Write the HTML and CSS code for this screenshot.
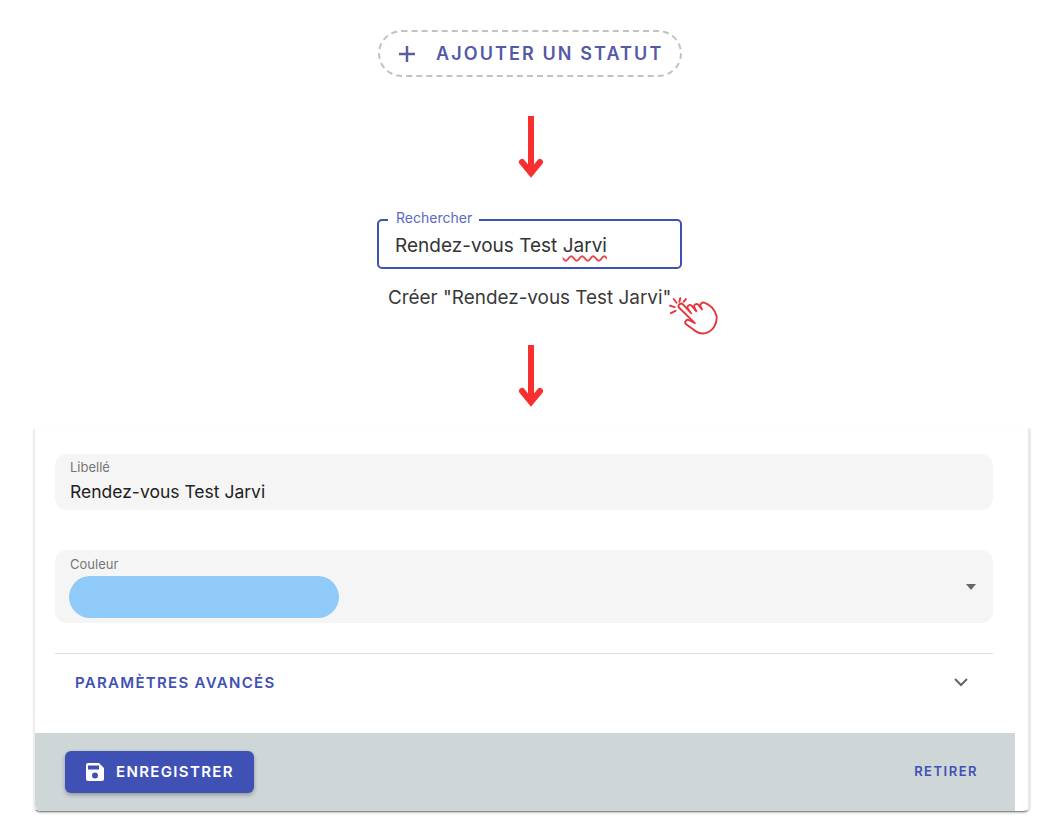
FILE: index.html
```html
<!DOCTYPE html>
<html lang="fr">
<head>
<meta charset="utf-8">
<title>Ajouter un statut</title>
<link rel="stylesheet" href="styles.css">
</head>
<body>
<main class="page">
  <div class="add-status">
    <svg class="plus" viewBox="0 0 18 18" width="18" height="18"><path d="M9 1v16M1 9h16"/></svg>
    <span>AJOUTER UN STATUT</span>
  </div>
  <svg class="arrow arrow-first" viewBox="0 0 26 62" width="26" height="62"><path class="arrow-line" d="M13 0v58"/><path class="arrow-head" d="M4 46l9 11 9-11"/></svg>
  <fieldset class="search">
    <legend>Rechercher</legend>
    <div class="search-value">Rendez-vous Test <span class="misspelt">Jarvi</span></div>
  </fieldset>
  <div class="create">
    <span>Créer "Rendez-vous Test Jarvi"</span>
    <svg class="hand" viewBox="0 0 52 42" width="49" height="40">
      <path class="rays" d="M12 2l-1 4M5 3l3 4M1 10l5 1.500M2 18l5-2.500M18 3l-2.500 3"/>
      <path class="hand-body" d="M10.500 12c-1.500-2.500 2-5.500 4-3.500l9 9.500-3.500-5c-1.500-2.500 2-5 4-3l5 6-2-4c-1.500-2.500 2-5 4-3l4 5-1.500-3c-1-3 2-5 4.500-4 6 2 11 8 12.500 14 1 8-4 17-13 18.500-5 .5-8.500-1.500-12-4.500l-7-5c-3-2.500 0-6 3-4.500l6 3z"/>
    </svg>
  </div>
  <svg class="arrow arrow-second" viewBox="0 0 26 62" width="26" height="62"><path class="arrow-line" d="M13 0v58"/><path class="arrow-head" d="M4 46l9 11 9-11"/></svg>
  <section class="card">
    <div class="card-body">
      <div class="field field-label">
        <div class="field-caption">Libellé</div>
        <div class="field-value">Rendez-vous Test Jarvi</div>
      </div>
      <div class="field field-color">
        <div class="field-caption">Couleur</div>
        <div class="color-row">
          <div class="color-pill"></div>
          <span class="caret"></span>
        </div>
      </div>
      <div class="advanced">
        <span>PARAMÈTRES AVANCÉS</span>
        <svg class="chevron" viewBox="0 0 14 9" width="14" height="9"><path d="M1 1l6 6 6-6"/></svg>
      </div>
    </div>
    <footer class="actions">
      <button class="save" type="button">
        <svg viewBox="0 0 18 18" width="18" height="18"><path fill="#fff" fill-rule="evenodd" d="M2 0h11l5 5v11a2 2 0 0 1-2 2H2a2 2 0 0 1-2-2V2a2 2 0 0 1 2-2zm0 2.500v4h11v-4zM9 9.500a3 3 0 1 0 0 6 3 3 0 0 0 0-6z"/></svg>
        <span>ENREGISTRER</span>
      </button>
      <span class="remove">RETIRER</span>
    </footer>
  </section>
</main>
</body>
</html>
```
FILE: styles.css
```css
* { box-sizing: border-box; }
html, body { margin: 0; padding: 0; background: #fff; }
body { font-family: Inter, "Liberation Sans", sans-serif; color: #2b2b2b; }
.page { width: 1060px; height: 820px; padding-top: 30px; display: flex; flex-direction: column; align-items: center; overflow: hidden; }

.add-status { width: 304px; height: 47px; border: 2px dashed #bfc2cb; border-radius: 24px; display: flex; align-items: center; padding-left: 18px; gap: 20px; color: #5459a8; font-size: 18px; font-weight: 600; letter-spacing: 2.100px; white-space: nowrap; }
.plus { flex: none; }
.plus path { fill: none; stroke: #5a5e9f; stroke-width: 2.500; }

.arrow { display: block; flex: none; margin-left: 2px; }
.arrow-line { fill: none; stroke: #f92f2f; stroke-width: 6; }
.arrow-head { fill: none; stroke: #f92f2f; stroke-width: 6; stroke-linecap: round; stroke-linejoin: miter; }
.arrow-first { margin-top: 39px; }
.arrow-second { margin-top: 35px; }

.search { width: 305px; height: 60px; margin: 31px 0 0 -1px; padding: 0 0 0 17px; border: 2px solid #3f51b5; border-radius: 5px; min-width: 0; flex: none; }
.search legend { margin-left: -8px; padding: 0 7px 4px 8px; font-size: 14px; line-height: 17px; color: #5a69c4; }
.search-value { font-size: 19px; line-height: 24px; margin: 4px 0 0 -1px; color: #333; }
.misspelt { text-decoration: underline wavy #e5484d 1.500px; text-underline-offset: 3px; }

.create { position: relative; width: 284px; margin-top: 17px; font-size: 18.900px; line-height: 24px; color: #3a3a3a; white-space: nowrap; flex: none; }
.hand { position: absolute; left: 281px; top: 10px; }
.rays { fill: none; stroke: #e5353a; stroke-width: 2; stroke-linecap: round; }
.hand-body { fill: #fff; stroke: #e5353a; stroke-width: 2; stroke-linejoin: round; }

.card { width: 996px; height: 384px; margin: 21px 0 0 4px; flex: none; border-radius: 0 0 6px 6px; border-left: 1px solid #ececec; border-right: 2px solid #e9e9e9; border-bottom: 1px solid #8d8f8f; box-shadow: 0 1px 2px rgba(0,0,0,.25); background: #fff; display: flex; flex-direction: column; }
.card-body { flex: 1; padding: 26px 35px 0 20px; }
.field { background: #f5f5f5; border-radius: 12px; padding-left: 15px; }
.field-label { height: 56px; padding-top: 6px; }
.field-color { height: 73px; margin-top: 40px; padding-top: 7px; }
.field-caption { font-size: 13px; line-height: 14px; color: #757575; }
.field-value { font-size: 17.500px; line-height: 22px; margin-top: 7px; color: #222; }
.color-row { display: flex; align-items: center; margin-top: 5px; padding-right: 17px; justify-content: space-between; }
.color-pill { width: 270px; height: 42px; margin-left: -1px; border-radius: 21px; background: #90caf9; }
.caret { width: 0; height: 0; margin-bottom: 21px; border-left: 5.500px solid transparent; border-right: 5.500px solid transparent; border-top: 6px solid #666; }

.advanced { height: 58px; margin-top: 30px; border-top: 1px solid #dfdfdf; padding: 0 25px 0 20px; display: flex; align-items: center; justify-content: space-between; color: #3f51b5; font-size: 15px; font-weight: 600; letter-spacing: 1.300px; }
.chevron path { fill: none; stroke: #666; stroke-width: 2; }

.actions { width: 980px; height: 78px; flex: none; background: #ced6d8; display: flex; align-items: center; justify-content: space-between; padding: 0 37px 0 30px; border-radius: 0 0 0 6px; }
.save { width: 189px; height: 42px; border: 0; border-radius: 6px; background: #3f51b5; color: #fff; display: flex; align-items: center; gap: 12px; padding: 0 0 0 21px; font: 600 15px Inter, "Liberation Sans", sans-serif; letter-spacing: 1.350px; box-shadow: 0 2px 4px rgba(0,0,0,.3); }
.save span { padding-bottom: 2px; }
.remove { padding-bottom: 2px; color: #3f51b5; font-size: 13px; font-weight: 600; letter-spacing: 1.500px; }
```
